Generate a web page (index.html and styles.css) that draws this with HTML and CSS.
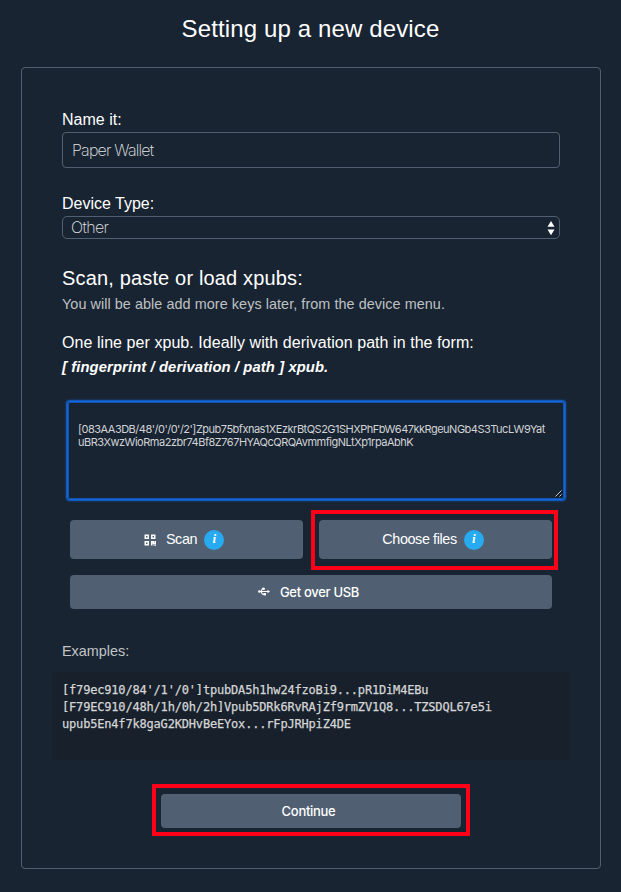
FILE: index.html
```html
<!DOCTYPE html>
<html lang="en">
<head>
<meta charset="utf-8">
<title>Setting up a new device</title>
<link rel="stylesheet" href="styles.css">
</head>
<body>
<h1 class="title"><span>Setting up a new device</span></h1>
<form class="card">
  <label class="label" for="name"><span>Name it:</span></label>
  <input class="input" id="name" type="text" value="Paper Wallet">
  <label class="label label-type" for="type"><span>Device Type:</span></label>
  <div class="select" id="type"><span>Other</span>
    <svg class="arrows" viewBox="0 0 8 16" width="8" height="16"><path d="M4 1 7.5 6.7h-7zM4 15.2 .5 9.4h7z" fill="#fff"/></svg>
  </div>
  <h2 class="subtitle"><span>Scan, paste or load xpubs:</span></h2>
  <p class="note"><span>You will be able add more keys later, from the device menu.</span></p>
  <p class="hint"><span>One line per xpub. Ideally with derivation path in the form:</span></p>
  <p class="format"><span>[ fingerprint / derivation / path ] xpub.</span></p>
  <div class="keys">
    <p class="key1"><span>[083AA3DB/48'/0'/0'/2']Zpub75bfxnas1XEzkrBtQS2G1SHXPhFbW647kkRgeuNGb4S3TucLW9Yat</span></p>
    <p class="key2"><span>uBR3XwzWioRma2zbr74Bf8Z767HYAQcQRQAvmmfigNLtXp1rpaAbhK</span></p>
    <svg class="grip" viewBox="0 0 8 8" width="8" height="8"><path d="M.5 6.5l6-6M4.5 6.5l2-2" stroke="#c8cbd0" stroke-width="1"/><path d="M1.5 7l6-6M5.5 7l2-2" stroke="#05080c" stroke-width=".7"/></svg>
  </div>
  <div class="actions">
    <button class="btn" type="button">
      <svg class="qr" viewBox="0 0 12 12" width="12" height="12" fill="none" stroke="#fff" stroke-width="1.5"><path d="M1.25 1.25h3v3h-3zM7.75 1.25h3v3h-3zM1.25 7.75h3v3h-3z"/><path d="M7.7 11.5V7.7h1.7v1.7h1.9V7M9.6 11.3h.9M11 11.3h.8"/></svg>
      <span class="scan">Scan</span><i class="info">i</i>
    </button>
    <div class="mark mark-files"><button class="btn" type="button"><span class="choose">Choose files</span><i class="info">i</i></button></div>
  </div>
  <button class="btn usb" type="button">
    <svg viewBox="0 0 12 10" width="12" height="10" fill="none" stroke="#fff" stroke-width="1.2"><path d="M1 4.5h9M2.8 4.5l1.7-2.7h2.5M2.8 4.5l1.7 2.7h2.5"/><path d="M9.5 2.8 12 4.5 9.5 6.2z" fill="#fff" stroke="none"/><circle cx="1.3" cy="4.5" r="1.2" fill="#fff" stroke="none"/><circle cx="5.4" cy="1.8" r="1.2" fill="#fff" stroke="none"/><path d="M5.6 6h2.4v2.4H5.6z" fill="#fff" stroke="none"/></svg>
    <span>Get over USB</span>
  </button>
  <p class="examples"><span>Examples:</span></p>
<pre class="code">[f79ec910/84'/1'/0']tpubDA5h1hw24fzoBi9...pR1DiM4EBu
[F79EC910/48h/1h/0h/2h]Vpub5DRk6RvRAjZf9rmZV1Q8...TZSDQL67e5i
upub5En4f7k8gaG2KDHvBeEYox...rFpJRHpiZ4DE</pre>
  <div class="mark mark-continue"><button class="btn" type="button"><span>Continue</span></button></div>
</form>
</body>
</html>
```

FILE: styles.css
```css
* { box-sizing: border-box; }
html { background: #192432; }
body {
  margin: 0;
  height: 892px;
  overflow: hidden;
  background: #192432;
  color: #fff;
  font-family: "Liberation Sans", sans-serif;
  font-size: 16px;
}
h1, h2, p { margin: 0; font-weight: 400; white-space: nowrap; }
.title { height: 67px; padding-top: 14px; line-height: 30px; font-size: 24px; letter-spacing: .13px; text-align: center; }
.card {
  display: flex;
  flex-direction: column;
  width: 580px;
  height: 802px;
  margin-left: 21px;
  padding: 42px 40px 0;
  border: 1px solid #506072;
  border-radius: 4px;
}
.label { height: 22px; line-height: 20px; font-size: 16px; }
.input {
  height: 36px;
  padding: 0 9px;
  border: 1px solid #506072;
  border-radius: 4px;
  background: transparent;
  color: #e4e6e9;
  font: 200 16px Inter, sans-serif;
  letter-spacing: -.8px;
  outline: 0;
}
.label-type { margin-top: 26px; }
.select {
  display: flex;
  align-items: center;
  justify-content: space-between;
  height: 23px;
  padding: 0 4px 2px 8px;
  border: 1px solid #506072;
  border-radius: 5px;
  color: #e4e6e9;
  font: 200 16px Inter, sans-serif;
  letter-spacing: -.6px;
}
.arrows { position: relative; top: 1px; }
.subtitle { margin-top: 26px; height: 27px; line-height: 26px; font-size: 20px; letter-spacing: .16px; }
.note { margin-top: 3px; height: 18px; line-height: 18px; font-size: 14.4px; letter-spacing: .06px; color: #bfc1c4; }
.hint { margin-top: 19px; height: 22px; line-height: 22px; font-size: 16px; letter-spacing: .06px; }
.format { margin-top: 3px; height: 20px; line-height: 20px; font-size: 14.8px; letter-spacing: .1px; font-weight: 700; font-style: italic; }
.keys {
  position: relative;
  width: 498px;
  height: 99px;
  margin: 24px 0 0 5px;
  padding: 21px 10px 0;
  border: 1px solid #1667d6;
  border-radius: 3px;
  box-shadow: 0 0 0 1px #1158b8, 0 0 2px 1px #1158b8, inset 0 0 0 1px #1054b0;
  color: #d0d3d6;
  font: 200 11px/13px Inter, sans-serif;
}
.key1 { letter-spacing: -.5px; }
.key2 { letter-spacing: -.48px; }
.grip { position: absolute; right: 1px; bottom: 1px; }
.actions { display: flex; margin: 10px 0 0 8px; height: 60px; }
.btn {
  display: flex;
  align-items: center;
  justify-content: center;
  width: 233px;
  height: 39px;
  padding: 0 2px 0 0;
  border: 0;
  border-radius: 4px;
  background: #506072;
  color: #fff;
  font: 14.4px "Liberation Sans", sans-serif;
  letter-spacing: -.4px;
}
.actions > .btn { margin-top: 10px; padding-right: 5px; }
.btn span { padding-bottom: 1px; }
.qr { margin: 1px 10px 0 0; }
.info {
  width: 20px;
  height: 20px;
  margin-left: 7px;
  border-radius: 50%;
  background: #27aaf0;
  font: italic 700 13px/18px "Liberation Serif", serif;
  text-align: center;
}
.mark { border: 4px solid #ff0018; }
.mark-files { width: 247px; height: 60px; margin-left: 8px; padding: 6px 0 0 4px; }
.mark-files .btn { padding-right: 5px; }
.usb { width: 482px; height: 34px; margin: 5px 0 0 8px; padding-right: 5px; font: 500 13px Inter, sans-serif; letter-spacing: -.3px; }
.usb svg { margin-right: 10px; }
.usb span { padding-bottom: 0; }
.examples { margin-top: 33px; height: 18px; line-height: 18px; font-size: 14.4px; color: #c2c4c7; }
.code {
  width: 518px;
  height: 88px;
  margin: 12px 0 0 -10px;
  padding: 10px;
  background: #17202b;
  color: #d4d5d6;
  font: 12px/17px "DejaVu Sans Mono", monospace;
  letter-spacing: -.18px;
  -webkit-text-stroke: .25px #d4d5d6;
  white-space: pre;
}
.mark-continue { width: 318px; height: 52px; margin: 24px 0 0 90px; padding: 6px 0 0 5px; }
.mark-continue .btn { width: 300px; height: 34px; padding-right: 5px; font: 500 13px Inter, sans-serif; letter-spacing: -.3px; }
.mark-continue .btn span { padding-bottom: 0; }
```
